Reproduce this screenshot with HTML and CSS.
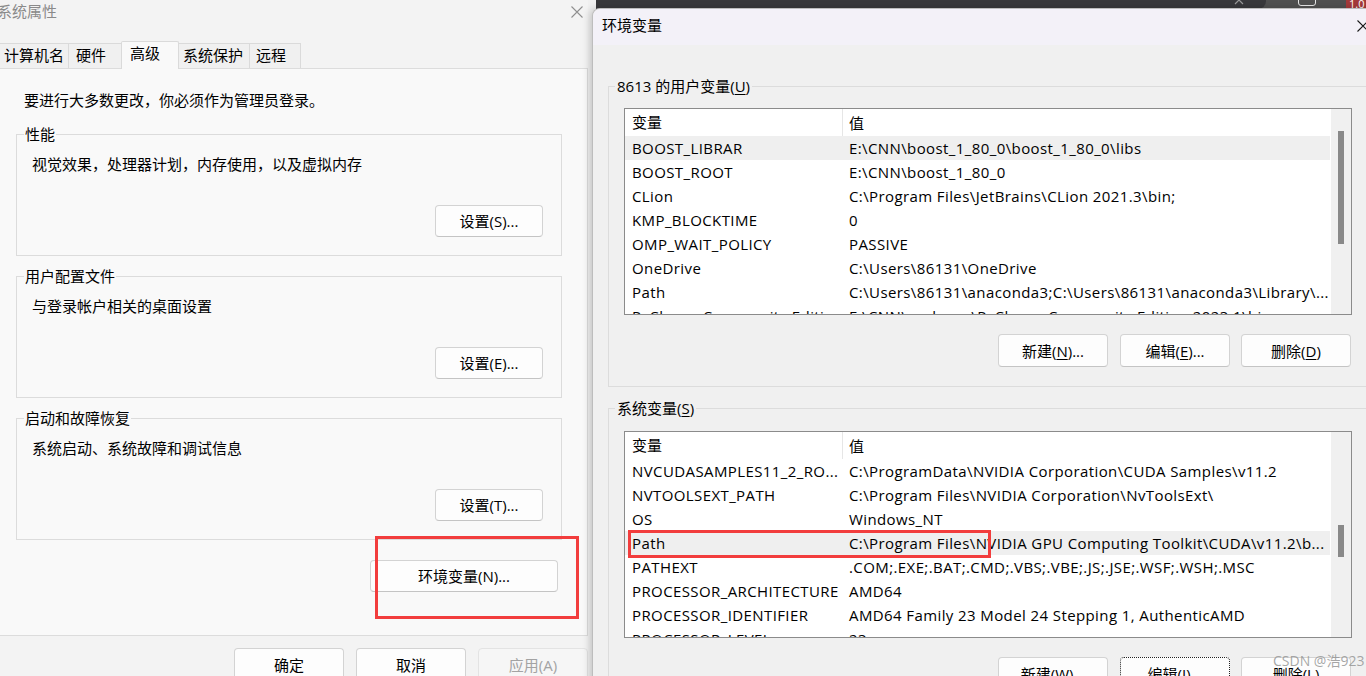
FILE: index.html
```html
<!DOCTYPE html>
<html lang="zh-CN">
<head>
<meta charset="utf-8">
<title>系统属性 - 环境变量</title>
<link rel="stylesheet" href="styles.css">
</head>
<body>
<div class="desk">
  <div class="topstrip">
    <div class="strip-tab">
      <svg class="strip-x" width="10" height="6" viewBox="0 0 10 6"><path d="M1 -4 L9 4 M9 -4 L1 4" stroke="#9a9a9a" stroke-width="1.2" fill="none"/></svg>
    </div>
    <div class="strip-icon"></div>
    <div class="strip-red">1.0</div>
  </div>

  <div class="win win-left">
    <div class="wl-title">
      <span class="wl-title-text">系统属性</span>
      <svg class="close-x close-gray" width="12" height="12" viewBox="0 0 12 12"><path d="M0.5 0.5 L11.5 11.5 M11.5 0.5 L0.5 11.5" stroke="currentColor" stroke-width="1.1" fill="none"/></svg>
    </div>
    <div class="tabs">
      <div class="tab t1">计算机名</div>
      <div class="tab t2">硬件</div>
      <div class="tab t3 active">高级</div>
      <div class="tab t4">系统保护</div>
      <div class="tab t5">远程</div>
    </div>
    <div class="panel">
      <p class="intro">要进行大多数更改，你必须作为管理员登录。</p>
      <fieldset class="grp">
        <legend>性能</legend>
        <p class="desc">视觉效果，处理器计划，内存使用，以及虚拟内存</p>
        <div class="btnrow"><button class="btn btn-set">设置(S)...</button></div>
      </fieldset>
      <fieldset class="grp">
        <legend>用户配置文件</legend>
        <p class="desc">与登录帐户相关的桌面设置</p>
        <div class="btnrow"><button class="btn btn-set">设置(E)...</button></div>
      </fieldset>
      <fieldset class="grp">
        <legend>启动和故障恢复</legend>
        <p class="desc">系统启动、系统故障和调试信息</p>
        <div class="btnrow"><button class="btn btn-set">设置(T)...</button></div>
      </fieldset>
      <div class="envrow"><button class="btn btn-env">环境变量(N)...</button></div>
    </div>
    <div class="footer">
      <button class="btn btn-foot">确定</button>
      <button class="btn btn-foot">取消</button>
      <button class="btn btn-foot btn-disabled">应用(A)</button>
    </div>
  </div>

  <div class="win win-right">
    <div class="wr-title">
      <span class="wr-title-text">环境变量</span>
      <svg class="close-x close-dark" width="12" height="12" viewBox="0 0 12 12"><path d="M0.5 0.5 L11.5 11.5 M11.5 0.5 L0.5 11.5" stroke="currentColor" stroke-width="1.1" fill="none"/></svg>
    </div>
    <div class="wr-body">
      <fieldset class="vgrp vgrp-user">
        <legend>8613 的用户变量(<u>U</u>)</legend>
        <div class="listbox">
          <div class="lb-main">
            <div class="lb-head"><div class="c1">变量</div><div class="c2">值</div></div>
            <div class="lb-row sel"><div class="c1">BOOST_LIBRAR</div><div class="c2">E:\CNN\boost_1_80_0\boost_1_80_0\libs</div></div>
            <div class="lb-row"><div class="c1">BOOST_ROOT</div><div class="c2">E:\CNN\boost_1_80_0</div></div>
            <div class="lb-row"><div class="c1">CLion</div><div class="c2">C:\Program Files\JetBrains\CLion 2021.3\bin;</div></div>
            <div class="lb-row"><div class="c1">KMP_BLOCKTIME</div><div class="c2">0</div></div>
            <div class="lb-row"><div class="c1">OMP_WAIT_POLICY</div><div class="c2">PASSIVE</div></div>
            <div class="lb-row"><div class="c1">OneDrive</div><div class="c2">C:\Users\86131\OneDrive</div></div>
            <div class="lb-row"><div class="c1">Path</div><div class="c2">C:\Users\86131\anaconda3;C:\Users\86131\anaconda3\Library\...</div></div>
            <div class="lb-row"><div class="c1">PyCharm Community Editi...</div><div class="c2">E:\CNN\pycharm\PyCharm Community Edition 2023.1\bin;</div></div>
          </div>
          <div class="lb-scroll"><div class="thumb thumb-user"></div></div>
        </div>
        <div class="vbtnrow">
          <button class="btn btn-v">新建(<u>N</u>)...</button>
          <button class="btn btn-v">编辑(<u>E</u>)...</button>
          <button class="btn btn-v">删除(<u>D</u>)</button>
        </div>
      </fieldset>

      <fieldset class="vgrp vgrp-sys">
        <legend>系统变量(<u>S</u>)</legend>
        <div class="listbox">
          <div class="lb-main">
            <div class="lb-head"><div class="c1">变量</div><div class="c2">值</div></div>
            <div class="lb-row"><div class="c1">NVCUDASAMPLES11_2_RO...</div><div class="c2">C:\ProgramData\NVIDIA Corporation\CUDA Samples\v11.2</div></div>
            <div class="lb-row"><div class="c1">NVTOOLSEXT_PATH</div><div class="c2">C:\Program Files\NVIDIA Corporation\NvToolsExt\</div></div>
            <div class="lb-row"><div class="c1">OS</div><div class="c2">Windows_NT</div></div>
            <div class="lb-row sel"><div class="c1">Path</div><div class="c2">C:\Program Files\NVIDIA GPU Computing Toolkit\CUDA\v11.2\b...</div></div>
            <div class="lb-row"><div class="c1">PATHEXT</div><div class="c2">.COM;.EXE;.BAT;.CMD;.VBS;.VBE;.JS;.JSE;.WSF;.WSH;.MSC</div></div>
            <div class="lb-row"><div class="c1">PROCESSOR_ARCHITECTURE</div><div class="c2">AMD64</div></div>
            <div class="lb-row"><div class="c1">PROCESSOR_IDENTIFIER</div><div class="c2">AMD64 Family 23 Model 24 Stepping 1, AuthenticAMD</div></div>
            <div class="lb-row"><div class="c1">PROCESSOR_LEVEL</div><div class="c2">23</div></div>
          </div>
          <div class="lb-scroll"><div class="thumb thumb-sys"></div></div>
        </div>
        <div class="vbtnrow">
          <button class="btn btn-v">新建(<u>W</u>)...</button>
          <button class="btn btn-v btn-focus">编辑(<u>I</u>)...</button>
          <button class="btn btn-v">删除(<u>L</u>)</button>
        </div>
      </fieldset>
    </div>
  </div>

  <div class="mark mark-env"></div>
  <div class="mark mark-path"></div>
  <div class="watermark">CSDN @浩923</div>
</div>
</body>
</html>
```

FILE: styles.css
```css
* { box-sizing: border-box; }
html, body { margin: 0; padding: 0; }
body {
  width: 1366px;
  height: 676px;
  overflow: hidden;
  background: #f0f0f0;
  font-family: "Open Sans", "Noto Sans CJK SC", sans-serif;
  font-size: 15px;
  line-height: 20px;
  color: #000;
}
p { margin: 0; }
u { text-decoration: underline; text-underline-offset: 2px; }

.desk { position: relative; width: 1366px; height: 676px; overflow: hidden; }

/* dark window strip behind the dialogs */
.topstrip {
  position: absolute; left: 596px; top: 0; width: 770px; height: 9px;
  background: #505050; display: flex; align-items: flex-end;
}
.strip-tab {
  width: 670px; height: 9px; background: #38383b; border-radius: 0 0 8px 0;
  display: flex; justify-content: flex-end; align-items: flex-start; padding-right: 22px;
}
.strip-x { display: block; }
.strip-icon { width: 18px; height: 12px; margin-left: 32px; margin-bottom: 3px; border: 1.5px solid #e6e6e6; border-radius: 3px; }
.strip-red {
  margin-left: auto; width: 20px; height: 9px; background: #a33a3a; color: #fff;
  font-size: 11px; line-height: 8px; padding-left: 3px; overflow: hidden;
}

/* generic window */
.win { position: absolute; overflow: hidden; }
.close-x { flex: none; display: block; }
.close-gray { color: #8f8f8f; }
.close-dark { color: #1a1a1a; }

/* left dialog */
.win-left {
  left: -6px; top: 0; width: 594px; height: 676px;
  background: #f3f3f3; display: flex; flex-direction: column;
}
.win-left > * { flex: none; }
.wl-title { height: 41px; display: flex; align-items: flex-start; padding: 1px 0 0 3px; color: #8a8a8a; }
.wl-title .close-x { margin-left: auto; margin-top: 5px; margin-right: 5px; }

.tabs { height: 27px; display: flex; align-items: flex-end; }
.tab {
  height: 25px; line-height: 22px; border: 1px solid #dadada; border-bottom: none;
  background: #f0f0f0; margin-right: -1px; padding-left: 6px; white-space: nowrap;
}
.tab.active {
  height: 28px; margin-bottom: -1px; background: #f9f9f9; position: relative; z-index: 1;
  border-radius: 2px 2px 0 0;
}
.t1 { width: 75px; padding-left: 9px; border-left-color: transparent; }
.t2 { width: 54px; padding-left: 7px; }
.t3 { width: 58px; padding-left: 8px; }
.t4 { width: 72px; padding-left: 4px; }
.t5 { width: 52px; }

.panel {
  background: #f9f9f9; border: 1px solid #dcdcdc;
  padding: 21px 25px 43px 21px;
  display: flex; flex-direction: column;
}
.intro { margin-left: 8px; }
.grp {
  margin: 10px 0 0 0; padding: 0 18px 18px 15px;
  border: 1px solid #dcdcdc; min-width: 0;
}
.grp:first-of-type { margin-top: 14px; }
.grp legend { padding: 0 1px; margin-left: -8px; line-height: 20px; }
.desc { margin-top: 10px; }
.btnrow { display: flex; justify-content: flex-end; margin-top: 31px; }
.envrow { display: flex; justify-content: flex-end; margin-top: 20px; padding-right: 4px; }

.btn {
  font: inherit; color: #000; background: #fdfdfd;
  border: 1px solid #d3d3d3; border-bottom-color: #c4c4c4; border-radius: 4px;
  padding: 0; margin: 0; display: flex; align-items: center; justify-content: center;
  white-space: nowrap;
}
.btn-set { width: 108px; height: 32px; }
.btn-env { width: 188px; height: 32px; }
.footer { display: flex; justify-content: flex-end; gap: 12px; padding-top: 12px; padding-right: 0; }
.btn-foot { width: 110px; height: 33px; }
.btn-disabled { color: #a3a3a3; background: #f6f6f6; border-color: #e3e3e3; }

/* right dialog */
.win-right {
  left: 592px; top: 8px; width: 800px; height: 700px;
  background: #f0f0f0; border: 1px solid #bdbdbd; border-right: none;
  border-radius: 8px 0 0 0;
  box-shadow: -3px 0 7px rgba(0, 0, 0, 0.16);
}
.wr-title {
  height: 36px; background: #f3f1f8; display: flex; align-items: flex-start;
  padding: 6px 0 0 9px;
}
.wr-title .close-x { margin-left: auto; margin-top: 5px; margin-right: 23px; }
.wr-body { padding: 31px 0 0 15px; }

.vgrp {
  width: 800px; margin: 0; padding: 0 0 19px 15px;
  border: 1px solid #dcdcdc; min-width: 0;
}
.vgrp legend { padding: 0 2px; margin-left: -9px; line-height: 20px; }
.vgrp-sys { margin-top: 11px; }
.vgrp-user .listbox { margin-top: 12px; }
.vgrp-sys .listbox { margin-top: 13px; }

.listbox {
  width: 728px; height: 207px; border: 1px solid #8b8b8b; background: #fff;
  display: flex;
}
.lb-main { width: 705px; overflow: hidden; }
.lb-head { height: 27px; display: flex; align-items: center; }
.lb-head .c1 { border-right: 1px solid #e6e6e6; height: 27px; line-height: 26px; }
.lb-row { height: 24px; line-height: 24px; display: flex; letter-spacing: 0.4px; }
.lb-row.sel { background: #efefef; }
.c1 { width: 218px; flex: none; padding-left: 7px; white-space: nowrap; overflow: hidden; }
.c2 { flex: 1; padding-left: 6px; white-space: nowrap; overflow: hidden; }

.lb-scroll { width: 20px; margin-left: 1px; background: #f0f0f0; }
.thumb { width: 6px; margin-left: 7px; background: #898989; }
.thumb-user { margin-top: 22px; height: 113px; }
.thumb-sys { margin-top: 93px; height: 32px; }

.vbtnrow { width: 727px; display: flex; justify-content: flex-end; gap: 11px; margin-top: 19px; }
.btn-v { width: 110px; height: 33px; }
.btn-v:first-child { margin-right: 1px; }
.btn-focus { border: 1px dotted #222; }

/* annotation overlays */
.mark { position: absolute; border: 3px solid #f23d3d; }
.mark-env { left: 375px; top: 536px; width: 204px; height: 83px; }
.mark-path { left: 628px; top: 530px; width: 363px; height: 28px; }

.watermark {
  position: absolute; left: 1273px; top: 653px;
  font-size: 14px; line-height: 16px; color: rgba(150, 150, 150, 0.85);
  white-space: nowrap;
}
```
